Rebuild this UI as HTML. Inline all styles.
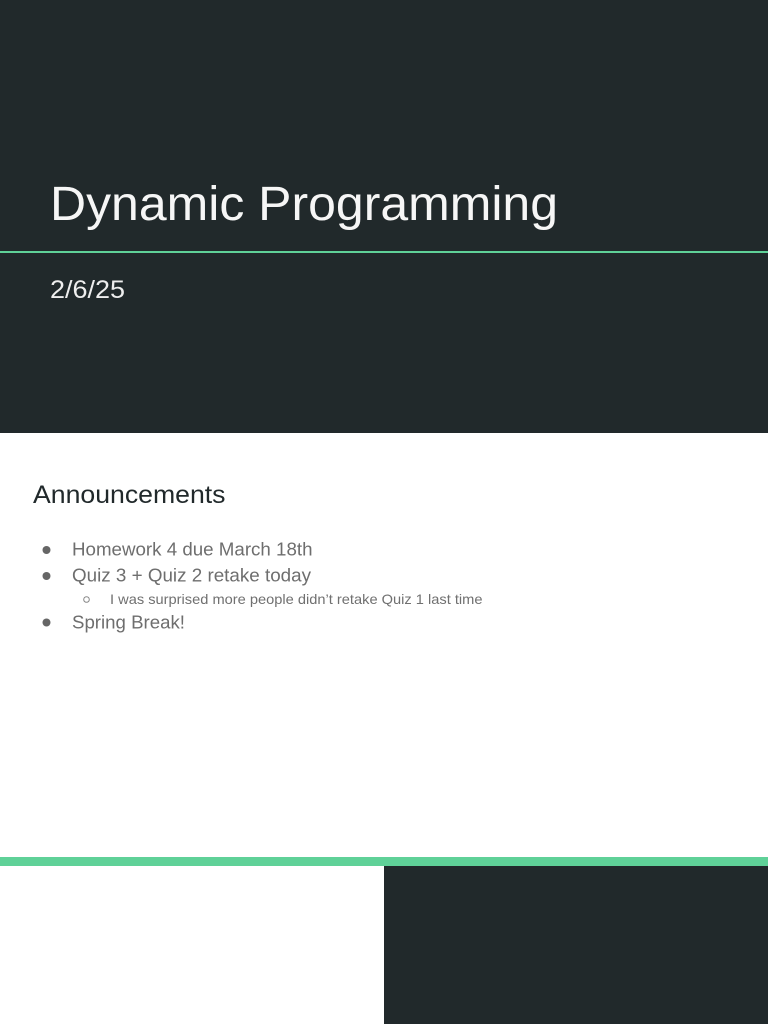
<!DOCTYPE html>
<html lang="en">
<head>
<meta charset="utf-8">
<title>Dynamic Programming</title>
<style>
html,body{margin:0;padding:0;background:#fff;width:768px;height:1024px;overflow:hidden}
svg{display:block}
text{font-family:"Liberation Sans",sans-serif}
</style>
</head>
<body>
<svg width="768" height="1024" viewBox="0 0 768 1024" xmlns="http://www.w3.org/2000/svg">
  <rect x="0" y="0" width="768" height="1024" fill="#ffffff"/>
  <rect x="0" y="0" width="768" height="433" fill="#21292b"/>
  <rect x="0" y="251" width="768" height="2" fill="#5fd198"/>
  <text x="50" y="220" font-size="48" fill="#f6f6f6" textLength="508" lengthAdjust="spacingAndGlyphs">Dynamic Programming</text>
  <text x="50" y="298" font-size="25" fill="#eeeeee" textLength="75" lengthAdjust="spacingAndGlyphs">2/6/25</text>

  <text x="33" y="503" font-size="25" fill="#21292b" textLength="192.500" lengthAdjust="spacingAndGlyphs">Announcements</text>

  <circle cx="46.500" cy="550" r="4" fill="#666666"/>
  <text x="72" y="555.500" font-size="18" fill="#6e6e6e" textLength="240.500" lengthAdjust="spacingAndGlyphs">Homework 4 due March 18th</text>
  <circle cx="46.500" cy="576" r="4" fill="#666666"/>
  <text x="72" y="581.500" font-size="18" fill="#6e6e6e" textLength="239" lengthAdjust="spacingAndGlyphs">Quiz 3 + Quiz 2 retake today</text>
  <circle cx="86.500" cy="599.500" r="2.800" fill="none" stroke="#888888" stroke-width="1"/>
  <text x="110" y="604" font-size="14" fill="#707070" textLength="372.500" lengthAdjust="spacingAndGlyphs">I was surprised more people didn’t retake Quiz 1 last time</text>
  <circle cx="46.500" cy="622.500" r="4" fill="#666666"/>
  <text x="72" y="628.500" font-size="18" fill="#6e6e6e" textLength="113" lengthAdjust="spacingAndGlyphs">Spring Break!</text>

  <rect x="0" y="857" width="768" height="9" fill="#5fd198"/>
  <rect x="384" y="866" width="384" height="158" fill="#21292b"/>
</svg>
</body>
</html>
